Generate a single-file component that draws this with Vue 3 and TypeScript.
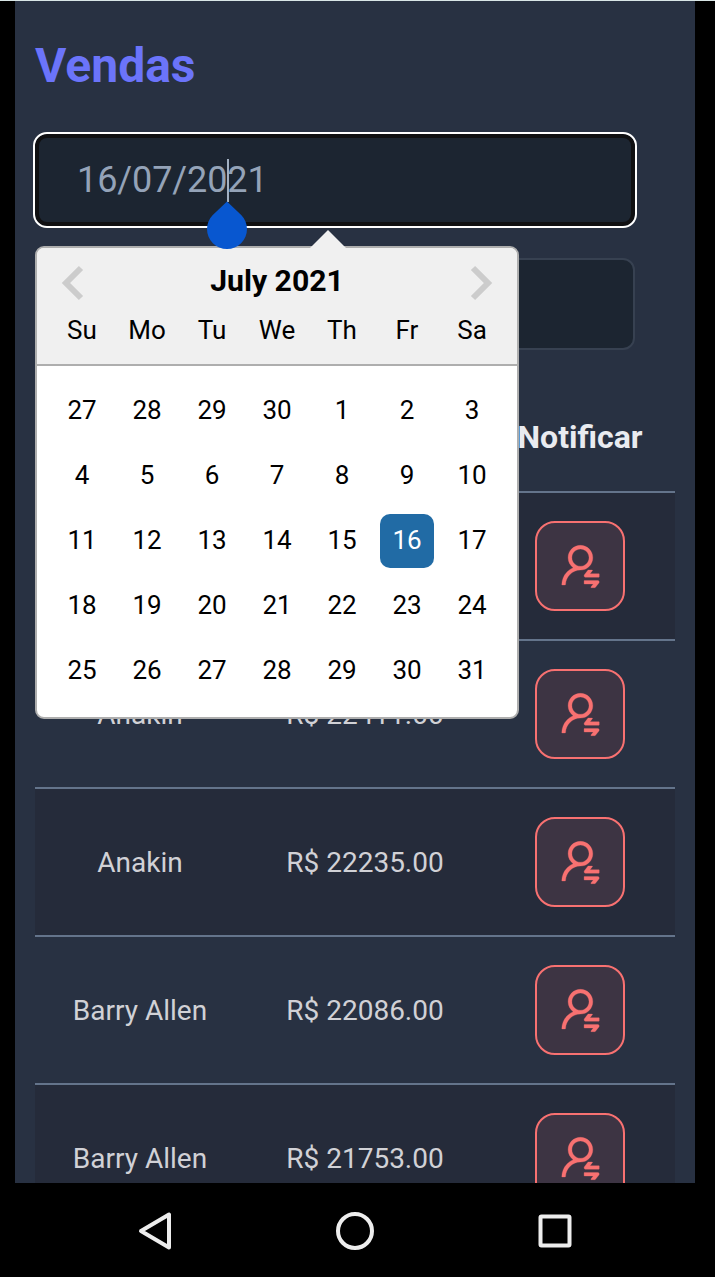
<script setup lang="ts">
interface Sale {
  name: string
  price: string
}

const weekdays: string[] = ['Su', 'Mo', 'Tu', 'We', 'Th', 'Fr', 'Sa']
const days: number[] = [27, 28, 29, 30, ...Array.from({ length: 31 }, (_, i) => i + 1)]
const selectedIndex = 19

const sales: Sale[] = [
  { name: '', price: '' },
  { name: 'Anakin', price: 'R$ 22411.00' },
  { name: 'Anakin', price: 'R$ 22235.00' },
  { name: 'Barry Allen', price: 'R$ 22086.00' },
  { name: 'Barry Allen', price: 'R$ 21753.00' },
]
</script>

<template>
  <div class="device">
    <main class="screen">
      <h1 class="title">Vendas</h1>

      <div class="field focused">
        <span class="value">16/07/2021</span>
        <span class="caret"></span>
        <svg class="handle" width="40" height="48" viewBox="0 0 40 48">
          <path d="M20 0.5 L34.2 13.9 A20 20 0 1 1 5.8 13.9 Z" fill="#0857d0" />
        </svg>

        <section class="calendar">
          <svg class="pointer" width="36" height="19" viewBox="0 0 36 19">
            <path d="M0 19 L18 1 L36 19 Z" fill="#f0f0f0" />
          </svg>
          <header class="cal-head">
            <div class="month-row">
              <svg width="24" height="36" viewBox="0 0 24 36">
                <path d="M20 3 L5 18 L20 33" fill="none" stroke="#ccc" stroke-width="6" />
              </svg>
              <strong>July 2021</strong>
              <svg width="24" height="36" viewBox="0 0 24 36">
                <path d="M4 3 L19 18 L4 33" fill="none" stroke="#ccc" stroke-width="6" />
              </svg>
            </div>
            <div class="grid names">
              <span v-for="w in weekdays" :key="w">{{ w }}</span>
            </div>
          </header>
          <div class="grid days">
            <span v-for="(d, i) in days" :key="i" :class="{ selected: i === selectedIndex }">{{ d }}</span>
          </div>
        </section>
      </div>

      <div class="field second"></div>

      <div class="table">
        <div class="row head"><span></span><span></span><span class="notify">Notificar</span></div>
        <div v-for="(s, i) in sales" :key="i" class="row" :class="{ dark: i % 2 === 0 }">
          <span>{{ s.name }}</span>
          <span>{{ s.price }}</span>
          <span class="action">
            <button type="button">
              <svg width="51" height="51" viewBox="0 0 1024 1024" fill="currentColor" stroke="currentColor" stroke-width="6">
                <path d="M759 335c0-137-111-248-248-248S263 198 263 335c0 82.8 40.6 156.2 103 201.2-.4.2-.7.3-.9.4-44.7 18.9-84.8 46-119.3 80.6a373.42 373.42 0 00-80.4 119.5A373.6 373.6 0 00136 874.8a8 8 0 008 8.2h59.9c4.3 0 7.9-3.5 8-7.8 2-77.2 32.9-149.5 87.6-204.3C356 614.2 431 583 511 583c137 0 248-111 248-248zM511 507c-95 0-172-77-172-172s77-172 172-172 172 77 172 172-77 172-172 172zm105 221h264c4.4 0 8-3.6 8-8v-56c0-4.4-3.6-8-8-8H703.5l47.2-60.1a8.1 8.1 0 001.7-4.9c0-4.4-3.6-8-8-8h-72.6c-4.9 0-9.5 2.3-12.6 6.1l-68.5 87.1c-4.4 5.6-6.8 12.6-6.8 19.8.1 17.7 14.4 32 32.1 32zm240 64H592c-4.4 0-8 3.6-8 8v56c0 4.4 3.6 8 8 8h176.5l-47.2 60.1a8.1 8.1 0 00-1.7 4.9c0 4.4 3.6 8 8 8h72.6c4.9 0 9.5-2.3 12.6-6.1l68.5-87.1c4.4-5.6 6.8-12.6 6.8-19.8-.1-17.7-14.4-32-32.1-32z" />
              </svg>
            </button>
          </span>
        </div>
      </div>
    </main>

    <nav class="navbar">
      <svg width="40" height="40" viewBox="0 0 40 40"><path d="M6 20 L34 3.5 V36.5 Z" /></svg>
      <svg width="40" height="40" viewBox="0 0 40 40"><circle cx="20" cy="20" r="17" /></svg>
      <svg width="40" height="40" viewBox="0 0 40 40"><rect x="5.5" y="5.5" width="29" height="29" rx="1" /></svg>
    </nav>
  </div>
</template>

<style>
body {
  margin: 0;
  background: #000;
}
</style>

<style scoped>
* {
  box-sizing: border-box;
}
.device {
  width: 715px;
  height: 1277px;
  overflow: hidden;
  background: #000;
  border-top: 1px solid #d9e6e6;
  font-family: Roboto, sans-serif;
}
.screen {
  width: 680px;
  height: 1182px;
  margin: 0 auto 0 15px;
  padding: 0 20px;
  background: #283142;
  overflow: hidden;
}
.title {
  margin: 0;
  padding-top: 36px;
  height: 133px;
  font-size: 48px;
  line-height: 58px;
  font-weight: 700;
  color: #6b74fa;
}
.field {
  position: relative;
  width: 600px;
  height: 92px;
  border-radius: 12px;
  background: #1c2531;
}
.focused {
  display: flex;
  align-items: center;
  padding-left: 38px;
  border: 4px solid #101012;
  outline: 2px solid #fff;
}
.value {
  font-size: 36px;
  line-height: 44px;
  letter-spacing: -0.1px;
  color: #94a3b8;
}
.caret {
  position: absolute;
  left: 188px;
  top: 21px;
  width: 2px;
  height: 43px;
  background: #a3b1c2;
}
.handle {
  position: absolute;
  left: 168px;
  top: 63px;
  z-index: 3;
}
.second {
  margin-top: 32px;
  border: 2px solid #374151;
}
.calendar {
  position: absolute;
  left: -4px;
  top: 108px;
  z-index: 2;
  width: 484px;
  height: 473px;
  border: 2px solid #aeaeae;
  border-radius: 9px;
  background: #fff;
  color: #000;
}
.pointer {
  position: absolute;
  left: 273px;
  top: -19px;
}
.cal-head {
  height: 118px;
  border-bottom: 2px solid #aeaeae;
  border-radius: 7px 7px 0 0;
  background: #f0f0f0;
}
.month-row {
  display: flex;
  align-items: center;
  justify-content: space-between;
  height: 52px;
  padding: 18px 24px 0 24px;
}
.month-row strong {
  font-size: 30.2px;
  line-height: 36px;
  padding-bottom: 5px;
}
.grid {
  display: grid;
  grid-template-columns: repeat(7, 54px);
  column-gap: 11px;
  justify-content: center;
  font-size: 26px;
  line-height: 54px;
  text-align: center;
}
.names {
  margin-top: 3px;
}
.days {
  grid-auto-rows: 54px;
  row-gap: 11px;
  padding-top: 18px;
  line-height: 52px;
}
.selected {
  border-radius: 10px;
  background: #216ba5;
  color: #fff;
}
.table {
  width: 640px;
  margin-top: 33px;
}
.row {
  display: grid;
  grid-template-columns: 210px 240px 190px;
  align-items: center;
  height: 148px;
  border-bottom: 2px solid #64748b;
  color: #d1d1d6;
  font-size: 28px;
  text-align: center;
}
.head {
  height: 110px;
  color: #e9ebf0;
  font-size: 32px;
  font-weight: 700;
}
.dark {
  background: #252b3a;
}
.action {
  display: flex;
  justify-content: center;
}
button {
  display: flex;
  align-items: center;
  justify-content: center;
  width: 90px;
  height: 90px;
  padding: 1px 0 0;
  border: 2px solid #f87171;
  border-radius: 20px;
  background: #3d3443;
  color: #f87171;
}
.navbar {
  display: flex;
  justify-content: center;
  gap: 160px;
  padding-top: 28px;
  padding-right: 5px;
}
.navbar svg {
  fill: none;
  stroke: #ededed;
  stroke-width: 4;
  stroke-linejoin: round;
}
</style>
